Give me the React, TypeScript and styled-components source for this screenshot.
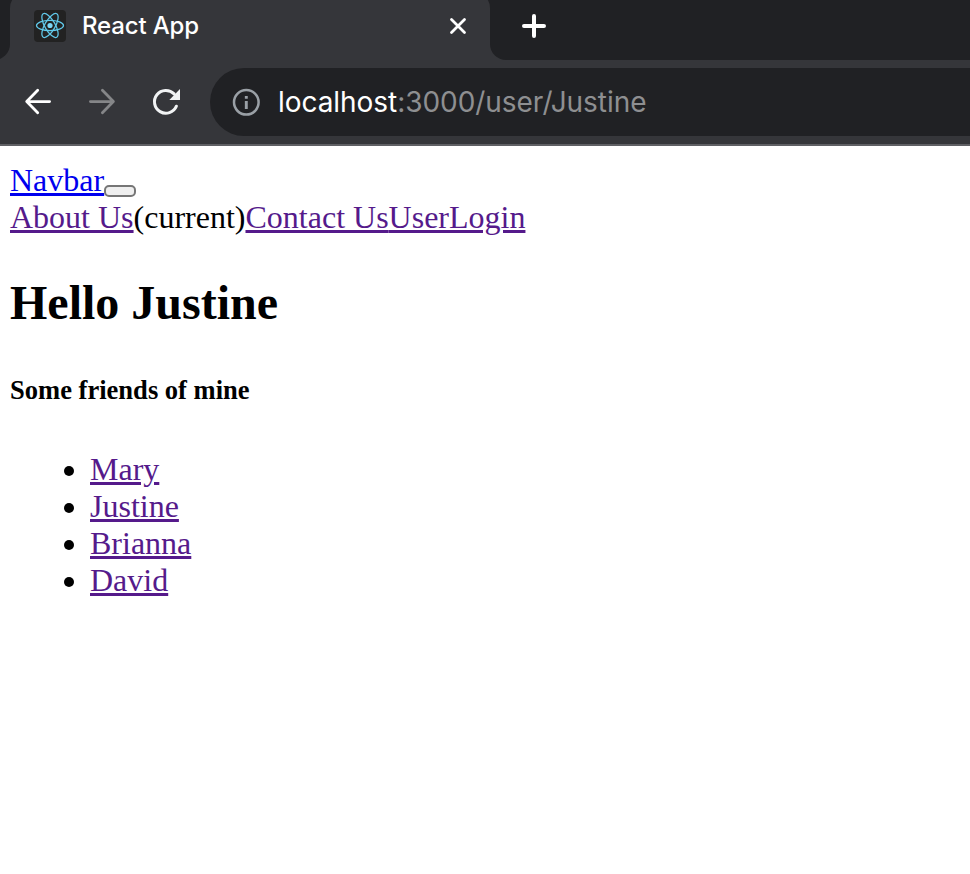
import React from "react";
import styled, { createGlobalStyle } from "styled-components";

const colors = {
  frame: "#202124",
  surface: "#35363a",
  divider: "#5f6064",
  visited: "#551a8b",
  link: "#0000ee",
};

const GlobalStyle = createGlobalStyle`
  * { box-sizing: border-box; }
  body { margin: 0; background: #fff; overflow: hidden; }
`;

const Window = styled.div`
  display: flex;
  flex-direction: column;
  width: 970px;
  height: 874px;
  overflow: hidden;
  background: #fff;
  font-family: "Inter", "Liberation Sans", sans-serif;
`;

const TabStrip = styled.div`
  display: flex;
  flex: none;
  height: 60px;
  overflow: hidden;
  background: ${colors.frame};
`;

const Shoulder = styled.div<{ $side: "left" | "right" }>`
  display: flex;
  flex: ${(p) => (p.$side === "left" ? "0 0 10px" : "1")};
  justify-content: flex-end;
  background: ${colors.surface};
  overflow: hidden;
`;

const ShoulderFill = styled.div<{ $side: "left" | "right" }>`
  display: flex;
  align-items: center;
  flex: none;
  width: ${(p) => (p.$side === "left" ? "32px" : "100%")};
  height: 60px;
  padding: 0 0 8px ${(p) => (p.$side === "left" ? "0" : "32px")};
  background: ${colors.frame};
  border-radius: ${(p) => (p.$side === "left" ? "0 0 16px 0" : "0 0 0 16px")};
`;

const Tab = styled.div`
  display: flex;
  flex: none;
  align-items: center;
  width: 480px;
  height: 68px;
  margin-top: -8px;
  padding: 0 22px 0 24px;
  background: ${colors.surface};
  border-radius: 16px 16px 0 0;
`;

const Favicon = styled.svg`
  flex: none;
  display: block;
  width: 32px;
  height: 32px;
`;

const TabTitle = styled.span`
  flex: 1;
  margin-left: 16px;
  color: #fff;
  font-size: 24px;
  font-weight: 450;
  letter-spacing: -0.15px;
  line-height: 32px;
  white-space: pre;
`;

const Icon = styled.svg`
  flex: none;
  display: block;
  fill: none;
`;

const Toolbar = styled.div`
  display: flex;
  flex: none;
  align-items: center;
  height: 86px;
  padding-left: 22px;
  background: ${colors.surface};
  border-bottom: 2px solid ${colors.divider};
`;

const NavButtons = styled.div`
  display: flex;
  gap: 32px;
  width: 188px;
`;

const AddressBar = styled.div`
  display: flex;
  flex: 1;
  align-items: center;
  gap: 18px;
  height: 68px;
  padding-left: 22px;
  background: ${colors.frame};
  border-radius: 34px 0 0 34px;
`;

const Address = styled.span`
  color: #8e8f91;
  font-size: 28px;
  line-height: 40px;
  letter-spacing: -0.05px;
  white-space: pre;
`;

const Host = styled.span`
  color: #fff;
`;

const Page = styled.main`
  flex: 1;
  padding: 16px 10px;
  color: #000;
  font-family: "Liberation Serif", serif;
  font-size: 32px;
  line-height: 37px;
`;

const NavLine = styled.div`
  display: flex;
  height: 37px;
  white-space: pre;
`;

const Link = styled.a<{ $fresh?: boolean }>`
  color: ${(p) => (p.$fresh ? colors.link : colors.visited)};
  text-decoration: underline;
  text-decoration-thickness: 3px;
  text-underline-offset: 2px;
`;

const Toggler = styled.button`
  width: 32px;
  height: 12px;
  margin: 23px 0 0;
  padding: 0;
  background: #efefef;
  border: 2px solid #767676;
  border-radius: 5px;
`;

const Title = styled.h1`
  margin: 39px 0 0;
  font-size: 48px;
  line-height: 55px;
`;

const Subtitle = styled.h5`
  margin: 45px 0 0;
  font-size: 26.56px;
  line-height: 30px;
`;

const Friends = styled.ul`
  margin: 46px 0 0;
  padding: 0 0 0 54px;
  list-style: none;
`;

const Friend = styled.li`
  display: flex;
  align-items: center;
  gap: 16px;
  height: 37px;

  &::before {
    content: "";
    width: 10px;
    height: 10px;
    margin-top: 3px;
    background: #000;
    border-radius: 50%;
  }
`;

const friends = ["Mary", "Justine", "Brianna", "David"];

export default function App() {
  return (
    <Window>
      <GlobalStyle />
      <TabStrip>
        <Shoulder $side="left">
          <ShoulderFill $side="left" />
        </Shoulder>
        <Tab>
          <Favicon viewBox="0 0 32 32">
            <rect width="32" height="32" rx="4" fill="#222" />
            <g fill="none" stroke="#61c9ea" strokeWidth="1.25">
              {[0, 60, 120].map((angle) => (
                <ellipse key={angle} cx="16" cy="15.5" rx="13.5" ry="5.2" transform={`rotate(${angle} 16 15.5)`} />
              ))}
            </g>
            <circle cx="16" cy="15.5" r="2.6" fill="#7cd7f7" />
          </Favicon>
          <TabTitle>React App</TabTitle>
          <Icon width="20" height="20" viewBox="0 0 20 20" stroke="#fff" strokeWidth="2.8" strokeLinecap="round">
            <path d="M3.5 3.5 16.5 16.5M16.5 3.5 3.5 16.5" />
          </Icon>
        </Tab>
        <Shoulder $side="right">
          <ShoulderFill $side="right">
            <Icon width="24" height="24" viewBox="0 0 24 24" stroke="#fff" strokeWidth="4" strokeLinecap="round">
              <path d="M12 2V22M2 12H22" />
            </Icon>
          </ShoulderFill>
        </Shoulder>
      </TabStrip>
      <Toolbar>
        <NavButtons>
          <Icon width="32" height="32" viewBox="0 0 32 32" stroke="#fff" strokeWidth="2.8" strokeLinecap="round" strokeLinejoin="round">
            <path d="M27.6 15.6H5M15.7 4.3 4.7 15.6 15.7 26.7" />
          </Icon>
          <Icon width="32" height="32" viewBox="0 0 32 32" stroke="#858688" strokeWidth="2.8" strokeLinecap="round" strokeLinejoin="round">
            <path d="M4.4 15.6H27M16.4 4.3 27.4 15.6 16.4 26.7" />
          </Icon>
          <Icon width="32" height="32" viewBox="0 0 32 32" stroke="#f1f3f4" strokeWidth="3" strokeLinecap="round">
            <path d="M26.4 20.2A11.4 11.4 0 1 1 24.1 7.9" />
            <path d="M30 3V14H19.3Z" fill="#f1f3f4" stroke="none" />
          </Icon>
        </NavButtons>
        <AddressBar>
          <Icon width="28" height="28" viewBox="0 0 28 28">
            <circle cx="14.3" cy="14.3" r="12.3" stroke="#9aa0a6" strokeWidth="2.5" />
            <path d="M14.3 8V10.8M14.3 13V21" stroke="#9aa0a6" strokeWidth="2.9" />
          </Icon>
          <Address>
            <Host>localhost</Host>:3000/user/Justine
          </Address>
        </AddressBar>
      </Toolbar>
      <Page>
        <nav>
          <NavLine>
            <Link $fresh>Navbar</Link>
            <Toggler aria-label="Toggle navigation" />
          </NavLine>
          <NavLine>
            <Link>About Us</Link>
            <span>(current)</span>
            <Link>Contact Us</Link>
            <Link>User</Link>
            <Link>Login</Link>
          </NavLine>
        </nav>
        <Title>Hello Justine</Title>
        <Subtitle>Some friends of mine</Subtitle>
        <Friends>
          {friends.map((name) => (
            <Friend key={name}>
              <Link>{name}</Link>
            </Friend>
          ))}
        </Friends>
      </Page>
    </Window>
  );
}
